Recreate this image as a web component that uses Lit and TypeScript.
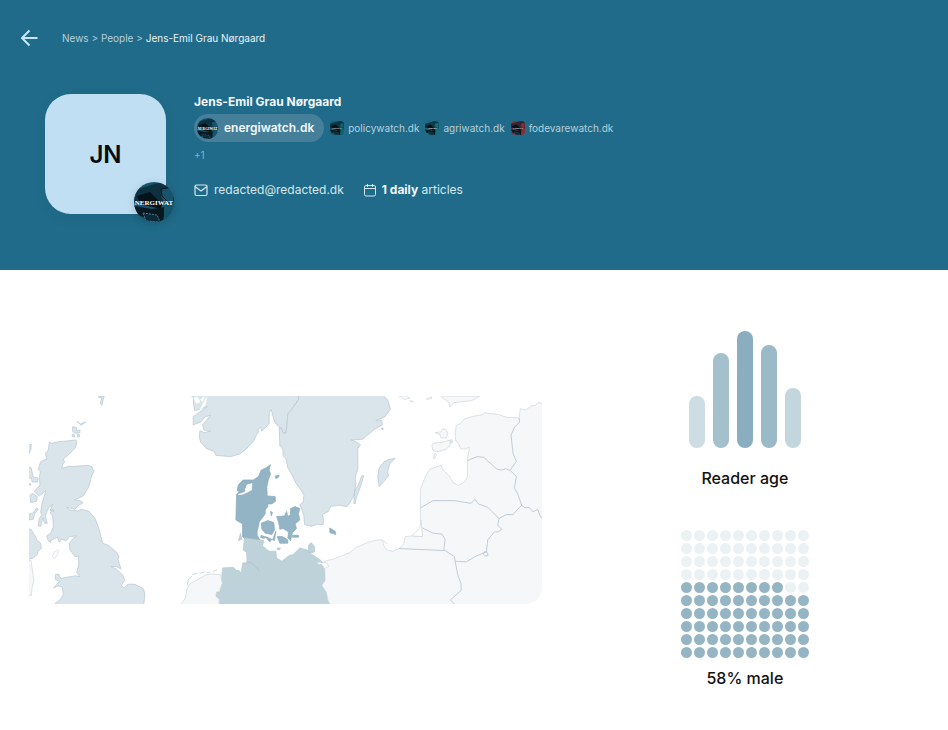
import { LitElement, html, css, svg } from "lit";
import { customElement } from "lit/decorators.js";

type Shape = { kind: string; d: string };

const SHAPES: Shape[] = [
  // Great Britain, Northern Ireland and the islands
  { kind: "tint", d: "M88 156L95 160 115 155 130 154 168 150 171 158 165 175 148 192 130 207 134 216 129 222 125 235 150 228 156 230 205 226 216 230 218 238 223 242 215 258 207 290 190 318 163 330 185 334 188 340 175 346 165 358 140 352 150 360 172 363 185 358 207 364 225 385 235 410 243 440 248 460 265 466 290 487 297 500 294 508 303 537 290 530 273 530 290 538 308 555 315 572 304 585 312 594 325 583 345 583 370 596 375 612 370 660 L106 660 106 640 120 630 130 615 127 592 115 588 101 594 118 575 106 568 106 554 116 553 122 566 135 563 165 558 180 560 170 548 176 525 176 499 165 500 150 480 148 460 160 445 170 438 148 440 140 452 125 448 118 457 112 442 92 452 92 458 84 452 80 438 92 430 100 410 98 378 90 370 98 358 102 364 90 362 98 343 85 355 76 378 82 400 74 400 68 384 62 410 54 408 58 385 66 375 62 368 66 340 78 302 58 318 42 305 60 285 58 262 61 245 55 238 62 215 72 210 80 208 76 190 85 180Z" },
  { kind: "tint", d: "M20 232L33 232 40 262 54 264 53 276 36 276 34 264 20 264Z M20 166L34 163 33 178 28 190 20 190Z M30 316L38 310 52 320 50 334 32 338Z M27 372L38 370 50 354 55 358 44 372 40 388 27 390Z M20 280L32 281 32 286 20 286Z M20 418L33 418 44 436 52 452 62 460 64 476 54 484 52 494 40 504 20 510Z" },
  { kind: "tint", d: "M158 110L170 113 170 122 180 120 180 128 164 130 158 124Z M170 94L181 102 197 96 184 106Z M156 134l7 0 1 7-7-1Z M172 132l6 2 1 7-6 0Z M235 18L253 18 248 34 246 46 241 40 245 24 236 22Z" },
  { kind: "pale", d: "M20 511L33 512 37 540 42 572 36 594 34 616 20 616Z" },
  { kind: "open", d: "M97 500L101 489 113 480 116 484 111 496 104 506Z" },

  // Norway
  { kind: "tint", d: "M513 0L514 18 522 22 520 36 524 62 540 58 562 50 520 80 520 105 542 96 556 80 572 76 548 104 552 120 572 124 552 128 540 122 538 140 542 156 560 176 582 184 588 196 608 198 632 200 660 192 680 176 702 152 712 130 716 128 714 118 722 112 726 124 738 112 748 100 748 70 754 58 762 90 768 102 776 108 784 114 790 130 798 130 802 100 804 72 822 50 836 28 836 0Z" },
  { kind: "gap", d: "M522 24L534 22 540 36 530 40Z M540 60L560 22 556 46Z M542 30L552 20 548 34Z" },

  // Sweden with Öland and Gotland
  { kind: "tint", d: "M836 0L836 28 822 50 804 72 802 100 798 130 790 130 784 114 778 112 780 168 789 178 790 198 799 208 804 234 815 252 826 276 846 304 852 316 850 338 840 344 846 360 852 376 854 404 874 409 892 404 910 404 911 392 908 374 926 364 932 350 956 346 982 350 990 338 1003 316 1008 282 1006 262 1014 238 1014 176 1022 164 1006 154 994 150 1028 148 1064 118 1088 104 1086 92 1068 92 1096 80 1112 58 1104 30 1092 18 1092 0Z M1002 340L1004 304 1014 288 1026 258 1032 256 1022 290 1010 322 1006 342Z M1078 290L1074 260 1078 234 1092 216 1104 210 1126 205 1110 222 1104 244 1106 258 1088 280Z M1086 114l4 0 0 5-4 0Z" },

  // Denmark
  { kind: "dark", d: "M650 312L664 302 692 302 698 282 676 276 656 294 652 304 657 284 670 270 700 270 716 260 724 240 738 234 752 224 748 240 752 252 746 268 741 290 742 318 766 320 767 334 756 342 744 342 744 350 736 360 736 372 726 386 718 396 716 408 712 424 712 436 720 450 676 448 668 440 668 402 648 390Z M724 400L744 392 762 398 764 420 756 434 736 430 726 418Z M776 396L770 380 794 378 800 364 804 380 812 374 812 356 826 350 840 356 836 372 840 390 826 402 830 416 818 428 812 452 804 444 806 426 790 416 780 418Z M772 440L788 440 804 450 804 460 780 460Z M766 258l12-2-2 6-8 4Z M930 414L946 424 948 434 930 428Z M724 436l14 6-6 4-10-4Z M752 364l6 4-4 10Z M758 450l10-26-4 28Z M736 440l20 8-6 8Z M818 436l18 0 0 6-18 0Z" },
  { kind: "dark", d: "M655 286L668 274 690 272 694 278 680 284 672 304 658 308 653 298Z" },
  { kind: "gap", d: "M655 314L676 306 682 286 696 281 695 300 680 308 668 313Z" },

  // Germany
  { kind: "teal", d: "M674 444L718 450 732 452 728 468 748 484 768 484 770 504 786 514 806 498 820 494 840 474 862 480 870 490 890 502 906 514 914 536 916 572 906 586 920 608 924 630 930 642 930 660 594 660 598 628 588 620 590 606 600 606 606 560 608 534 640 532 650 542 658 542 664 552 668 520 682 518 680 488 670 480Z M866 484L866 466 874 458 884 470 884 486 870 490Z M772 474l10 0-4 6-6-1Z M656 452l6-22 4 18Z" },
  { kind: "line", d: "M680 516L694 518 718 542" },

  // Netherlands and its islands
  { kind: "pale", d: "M480 646L496 626 502 594 512 580 536 568 556 556 576 552 602 554 607 580 598 606 590 606 588 620 598 628 596 660 480 660Z" },
  { kind: "coast", d: "M502 586L506 568 516 560 M518 554L532 550 M540 550L554 546 M562 548L572 546 M580 544L592 540" },

  // Poland, Kaliningrad and the Baltic mainland
  { kind: "pale", d: "M914 514L946 506 990 488 1006 474 1048 456 1072 450 1088 450 1092 466 1100 480 1118 484 1138 476 1152 462 1156 440 1178 438 1208 440 1206 414 1202 390 1202 298 1216 262 1230 238 1264 226 1270 240 1290 260 1300 278 1316 286 1334 276 1343 262 1343 205 1348 182 1348 172 1334 178 1322 176 1318 164 1308 152 1306 128 1310 106 1324 100 1332 88 1356 80 1388 74 1394 68 1438 74 1460 82 1498 84 1502 56 1518 60 1534 48 1548 46 1554 38 1570 40 1570 660 930 660 930 642 924 630 920 608 906 586 916 572Z M1240 160L1270 156 1292 150 1296 158 1280 178 1252 186 1240 182 1236 166Z M1246 128L1264 126 1268 116 1278 118 1284 130 1280 144 1264 144 1260 134Z M1290 150l8 0 0 8-8 0Z M1240 204l6-14 4 4-6 14Z M1262 18L1290 40 1290 52 1302 38 1356 32 1380 18Z" },
  { kind: "open", d: "M892 516L922 520 926 530 914 536 906 524 894 522Z M1090 452L1102 462 M1176 438L1200 414 1204 390 1208 440Z M1138 18l16 10 16-4-10-6Z M1170 32l12 2-6 2Z M1220 28l14-8 2 6Z" },
  { kind: "line", d: "M1343 212L1372 200 1392 202 1432 238 1448 240 1458 236 1472 242 M1498 84L1500 96 1484 112 1474 136 1480 190 1490 214 1472 240 M1472 242L1490 260 1484 294 1494 312 1506 346 M1506 346L1494 358 1480 374 1458 374 1438 386 M1506 346L1516 354 1528 352 1540 366 1554 358 1562 380 1570 384 M1202 354L1240 332 1302 332 1354 340 1366 328 1376 342 1404 352 1438 386 M1438 386L1434 406 1446 418 1436 426 1424 426 1404 450 1400 486 1366 500 1340 516 1306 514 M1208 414L1240 430 1266 432 1276 448 1272 482 M1138 476L1276 482 1304 500 1306 514 1314 554 1324 582 1324 602 1292 630 1308 646 M1390 492l6-8 8 6 0 8-8 0Z" },
];

const AGE_BARS = [
  { height: 52, color: "#cedce4" },
  { height: 95, color: "#a5c0cd" },
  { height: 117, color: "#8aadc0" },
  { height: 103, color: "#9bbac7" },
  { height: 60, color: "#c4d6dd" },
];

const MALE_PERCENT = 58;

@customElement("source-logo")
export class SourceLogo extends LitElement {
  static properties = { tone: {}, mark: {}, size: { type: Number } };
  declare tone: string;
  declare mark: string;
  declare size: number;

  static styles = css`
    :host { display: block; flex: none; overflow: hidden; }
    svg { display: block; }
    text { font-family: "Liberation Serif", serif; font-weight: 700; fill: #fff; }
  `;

  render() {
    return html`<svg width=${this.size} height=${this.size} viewBox="0 0 40 40" aria-hidden="true">
      <rect width="40" height="40" fill=${this.tone}></rect>
      <path d="M0 8L14 4 27 0 40 0V5L28 8 27 14 31 22 24 25 0 20Z" fill="#0a2430" opacity=".7"></path>
      <path d="M3 14L16 10 28 22 27 27 6 22Z" fill="#06121a"></path>
      <path d="M27 7L39 5 40 20 34 20 28 14Z" fill=${this.tone} stroke="#07131b" stroke-width="1"></path>
      <path d="M0 24L18 27 31 25 29 40 22 40 4 33Z" fill="#081820"></path>
      <path d="M30 25L40 27 40 34 30 40Z" fill=${this.tone}></path>
      <path d="M9 31L23 33 26 40 12 39Z" fill="#0b2a38" stroke="#54798a" stroke-width="1" stroke-dasharray="2 1"></path>
      <text x="20" y="23" text-anchor="middle" font-size="7">${this.mark}</text>
    </svg>`;
  }
}

@customElement("app-root")
export class AppRoot extends LitElement {
  static styles = css`
    :host {
      display: block;
      min-height: 100vh;
      background: #fff;
      color: #111;
      font-family: Inter, "Liberation Sans", sans-serif;
    }
    * { box-sizing: border-box; }
    a { color: inherit; text-decoration: none; }
    h1, p { margin: 0; }
    .hero { background: #206b89; color: #d5e7ef; padding: 26px 20px 56px; }
    .top { display: flex; align-items: center; gap: 24px; height: 24px; }
    .back {
      display: block; padding: 0; border: 0; width: 18px; height: 18px;
      background: none; color: #c9e6f4; cursor: pointer;
    }
    .back svg, .meta svg, .map, .avatar-logo { display: block; }
    .crumbs { font-size: 10px; line-height: 16px; color: #b5d0dc; }
    .crumbs [aria-current] { color: #e9f2f6; }
    .profile { display: flex; gap: 28px; margin: 44px 0 0 25px; }
    .avatar {
      position: relative; flex: none; width: 121px; height: 120px;
      display: grid; place-items: center;
      border-radius: 26px; background: #c1dff3; color: #080c0f;
      font-size: 24px; font-weight: 600; box-shadow: 0 4px 16px #0000000c;
    }
    .avatar-logo {
      position: absolute; right: -8px; bottom: -8px;
      border-radius: 50%; box-shadow: 0 2px 8px #00000028;
    }
    .who { min-width: 0; }
    h1 { color: #f2f8fb; font-size: 12px; line-height: 16px; font-weight: 700; }
    .sources { display: flex; align-items: center; gap: 6px; margin-top: 4px; }
    .source { display: flex; align-items: center; gap: 4px; font-size: 10px; line-height: 16px; color: #b5d0dc; }
    .source source-logo { border-radius: 4px; }
    .main-source {
      gap: 6px; height: 28px; padding: 0 10px 0 3px; border-radius: 14px;
      background: #467f9a; color: #f2f8fb; font-size: 12px; font-weight: 600;
    }
    .main-source source-logo { border-radius: 50%; }
    .more { margin-top: 5px; font-size: 10px; line-height: 16px; color: #86b0c3; }
    .meta { display: flex; gap: 20px; margin-top: 19px; font-size: 12px; line-height: 16px; }
    .meta > * { display: flex; align-items: center; gap: 6px; }
    .meta b { color: #f2f8fb; font-weight: 700; }
    .insights { display: grid; grid-template-columns: 4fr 3fr; }
    .region { align-self: center; padding-left: 29px; }
    .map { width: 100%; border-radius: 0 0 16px 0; }
    .map path { stroke: #b5c4d2; stroke-width: 2; stroke-linejoin: round; }
    .map .tint { fill: #dae5eb; }
    .map .pale { fill: #f5f7f9; stroke: #ccd4dd; }
    .map .open { fill: #fff; stroke: #ccd4dd; }
    .map .gap { fill: #fff; stroke: #fff; }
    .map .dark { fill: #93b4c4; stroke: #86aabd; }
    .map .teal { fill: #bdd3d9; }
    .map .line { fill: none; stroke: #a8b7c6; }
    .map .coast { fill: none; stroke: #bdc9d5; }
    .stats { display: flex; flex-direction: column; align-items: center; padding: 61px 0 40px; }
    .bars { display: flex; align-items: flex-end; gap: 8px; }
    .bar { width: 16px; border-radius: 8px; }
    .label { font-size: 16px; line-height: 24px; font-weight: 500; }
    .age-label { margin: 18px 0 40px; }
    .dots { display: grid; grid-template-columns: repeat(10, 11px); gap: 2px; margin-bottom: 8px; }
    .dot { height: 11px; border-radius: 50%; background: #ecf2f4; }
    .dot.on { background: #95b5c4; }
  `;

  private source(name: string, tone: string, mark: string) {
    return html`<a class="source" href="#">
      <source-logo .tone=${tone} .mark=${mark} .size=${14}></source-logo>${name}</a>`;
  }

  render() {
    const dots = Array.from({ length: 100 }, (_, i) => {
      const rowFromBottom = 9 - Math.floor(i / 10);
      return rowFromBottom * 10 + (i % 10) < MALE_PERCENT;
    });
    return html`
      <header class="hero">
        <div class="top">
          <button class="back" aria-label="Back">
            <svg width="18" height="18" viewBox="0 0 18 18" fill="none" stroke="currentColor" stroke-width="2" stroke-linejoin="round">
              <path d="M9.500 1.500L2 9l7.500 7.500M2 9h15.500"></path>
            </svg>
          </button>
          <nav class="crumbs" aria-label="Breadcrumb">
            <a href="#">News</a> &gt; <a href="#">People</a> &gt; <span aria-current="page">Jens-Emil Grau Nørgaard</span>
          </nav>
        </div>
        <div class="profile">
          <div class="avatar">
            JN
            <source-logo class="avatar-logo" .tone=${"#17536a"} .mark=${"NERGIWAT"} .size=${40}></source-logo>
          </div>
          <div class="who">
            <h1>Jens-Emil Grau Nørgaard</h1>
            <div class="sources">
              <a class="source main-source" href="#">
                <source-logo .tone=${"#17536a"} .mark=${"NERGIWAT"} .size=${21}></source-logo>energiwatch.dk</a>
              ${this.source("policywatch.dk", "#126068", "POLICY")}
              ${this.source("agriwatch.dk", "#17717c", "AGRIWA")}
              ${this.source("fodevarewatch.dk", "#8c2d3b", "FØDEVA")}
            </div>
            <p class="more">+1</p>
            <div class="meta">
              <a href="mailto:redacted@redacted.dk">
                <svg width="14" height="14" viewBox="0 0 14 14" fill="none" stroke="currentColor" stroke-width="1.200" stroke-linejoin="round">
                  <rect x="1" y="2" width="12" height="10.500" rx="1.500"></rect>
                  <path d="M1 3.500L7 8l6-4.500"></path>
                </svg>
                redacted@redacted.dk
              </a>
              <p>
                <svg width="12" height="14" viewBox="0 0 12 14" fill="none" stroke="currentColor" stroke-linejoin="round">
                  <rect x=".5" y="2.500" width="11" height="10.500" rx="1.500"></rect>
                  <path d="M.5 5.500h11M3.500 1v3M8.500 1v3"></path>
                </svg>
                <span><b>1 daily</b> articles</span>
              </p>
            </div>
          </div>
        </div>
      </header>
      <main class="insights">
        <div class="region">
          <svg class="map" viewBox="27 18 1539 624" role="img" aria-label="Readers by country">
            ${SHAPES.map((s) => svg`<path class=${s.kind} d=${s.d}></path>`)}
          </svg>
        </div>
        <div class="stats">
          <div class="bars">
            ${AGE_BARS.map((b) => html`<div class="bar" style="height:${b.height}px;background:${b.color}"></div>`)}
          </div>
          <p class="label age-label">Reader age</p>
          <div class="dots">${dots.map((on) => html`<div class=${on ? "dot on" : "dot"}></div>`)}</div>
          <p class="label">${MALE_PERCENT}% male</p>
        </div>
      </main>
    `;
  }
}
